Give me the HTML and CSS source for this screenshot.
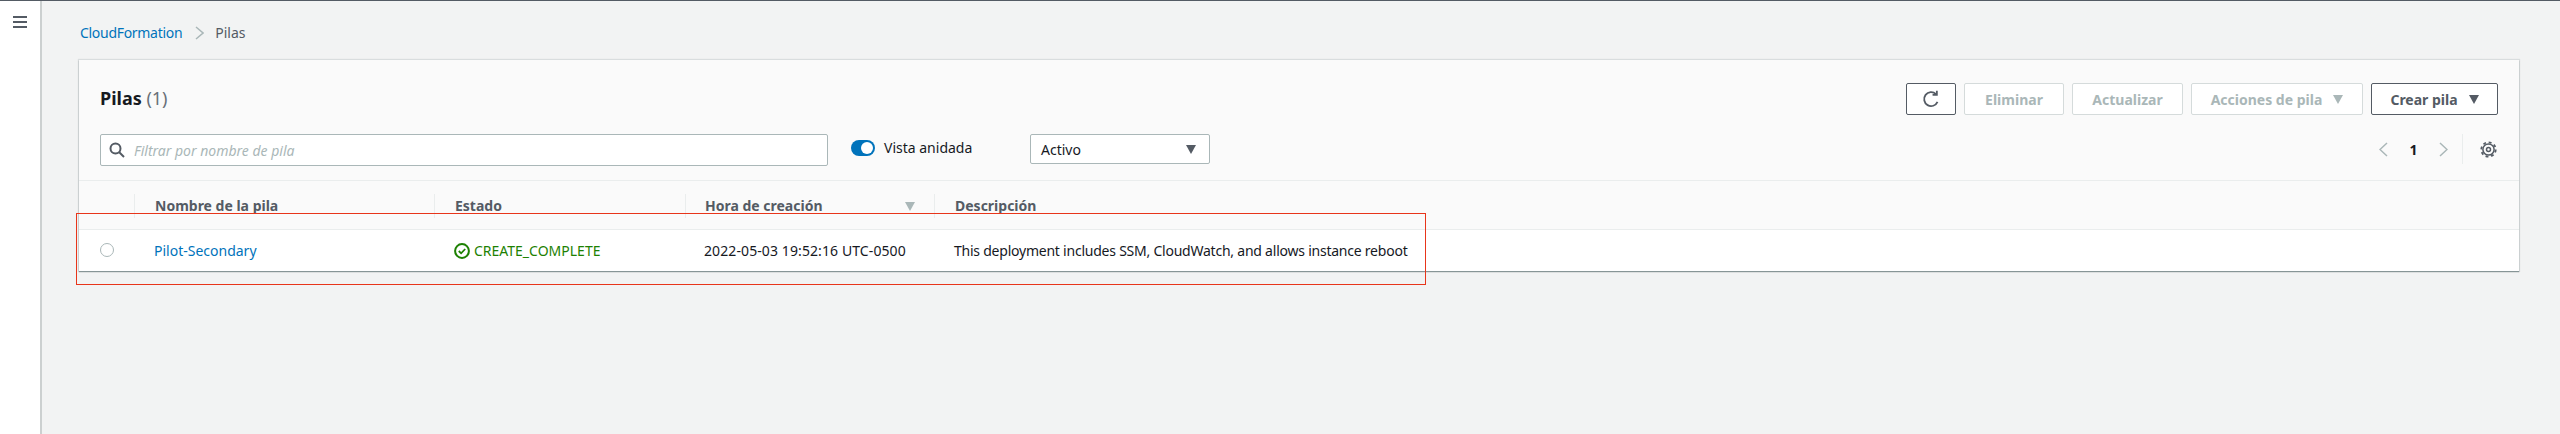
FILE: index.html
```html
<!DOCTYPE html>
<html lang="es">
<head>
    <meta charset="UTF-8">
    <meta name="viewport" content="width=device-width, initial-scale=1.0">
    <title>CloudFormation - Pilas</title>
    <link rel="stylesheet" href="styles.css">
</head>
<body>

    <!-- Barra lateral -->
    <aside class="side">
        <svg class="burger" width="14" height="12" viewBox="0 0 14 12"><path d="M0 1h14M0 6h14M0 11h14" stroke="#545b64" stroke-width="2"/></svg>
    </aside>

    <main class="content">
        <nav class="crumbs">
            <a class="link crumb-link" href="#">CloudFormation</a>
            <svg class="crumb-sep" width="9" height="14" viewBox="0 0 9 14"><path d="M1 1l7 6-7 6" fill="none" stroke="#aab7b8" stroke-width="1.5"/></svg>
            <span>Pilas</span>
        </nav>

        <section class="panel">
            <div class="panel-head">
                <div class="head-top">
                    <h1>Pilas <span class="count">(1)</span></h1>
                    <div class="actions">
                        <button class="btn btn-icon">
                            <svg width="18" height="18" viewBox="0 0 16 16"><path d="M13.8 10.6A6.2 6.2 0 1 1 12.4 3.6" fill="none" stroke="#545b64" stroke-width="1.6"/><path d="M13.2 .6v3.8H9.4" fill="none" stroke="#545b64" stroke-width="1.6"/></svg>
                        </button>
                        <button class="btn btn-off btn-eliminar">Eliminar</button>
                        <button class="btn btn-off btn-actualizar">Actualizar</button>
                        <button class="btn btn-off btn-acciones">Acciones de pila <i class="tri tri-off"></i></button>
                        <button class="btn btn-crear">Crear pila <i class="tri"></i></button>
                    </div>
                </div>
                <div class="head-bottom">
                    <label class="search">
                        <svg width="16" height="16" viewBox="0 0 16 16"><circle cx="6.5" cy="6.5" r="5" fill="none" stroke="#545b64" stroke-width="2"/><path d="M10 10l5 5" stroke="#545b64" stroke-width="2"/></svg>
                        <input type="text" placeholder="Filtrar por nombre de pila">
                    </label>
                    <span class="toggle"><i class="knob"></i></span>
                    <span class="toggle-label">Vista anidada</span>
                    <div class="select">Activo <i class="tri"></i></div>
                    <div class="pager">
                        <svg width="9" height="15" viewBox="0 0 9 15"><path d="M8 1L1 7.5 8 14" fill="none" stroke="#aab7b8" stroke-width="1.5"/></svg>
                        <span class="page-num">1</span>
                        <svg width="9" height="15" viewBox="0 0 9 15"><path d="M1 1l7 6.5L1 14" fill="none" stroke="#aab7b8" stroke-width="1.5"/></svg>
                        <span class="pager-sep"></span>
                        <svg class="gear" width="17" height="17" viewBox="0 0 17 17">
                            <circle cx="8.5" cy="8.5" r="5.6" fill="none" stroke="#545b64" stroke-width="1.5"/>
                            <circle cx="8.5" cy="8.5" r="7.2" fill="none" stroke="#545b64" stroke-width="1.8" stroke-dasharray="2.9 2.75"/>
                            <circle cx="8.5" cy="8.5" r="2" fill="none" stroke="#545b64" stroke-width="1.5"/>
                        </svg>
                    </div>
                </div>
            </div>

            <div class="cols cols-head">
                <div class="th"></div>
                <div class="th">Nombre de la pila</div>
                <div class="th">Estado</div>
                <div class="th th-sort">Hora de creación <i class="tri tri-off"></i></div>
                <div class="th">Descripción</div>
            </div>
            <div class="cols row">
                <div class="td td-radio"><span class="radio"></span></div>
                <div class="td"><a class="link" href="#">Pilot-Secondary</a></div>
                <div class="td status">
                    <svg width="16" height="16" viewBox="0 0 16 16"><circle cx="8" cy="8" r="6.9" fill="none" stroke="#1d8102" stroke-width="2"/><path d="M4.8 8l2.3 2.3 4.1-4.3" fill="none" stroke="#1d8102" stroke-width="1.8"/></svg>
                    CREATE_COMPLETE
                </div>
                <div class="td td-date">2022-05-03 19:52:16 UTC-0500</div>
                <div class="td td-desc">This deployment includes SSM, CloudWatch, and allows instance reboot</div>
            </div>
        </section>
    </main>

    <!-- Recuadro rojo de la captura -->
    <div class="mark"></div>

</body>
</html>
```

FILE: styles.css
```css
* {
    box-sizing: border-box;
}
body {
    margin: 0;
    height: 434px;
    display: flex;
    overflow: hidden;
    border-top: 1px solid #545b64;
    background: #f2f3f3;
    color: #16191f;
    font-family: "Noto Sans", sans-serif;
    font-size: 14px;
}
.side {
    width: 42px;
    flex: none;
    background: #fff;
    border-right: 2px solid #ccd0d0;
    padding: 15px 0 0 13px;
}
.burger {
    display: block;
}
.content {
    flex: 1;
    padding: 0 41px 0 37px;
}
.link {
    color: #0073bb;
    text-decoration: none;
}
.crumbs {
    height: 59px;
    padding: 22px 0 0 1px;
    display: flex;
    align-items: flex-start;
    color: #545b64;
    line-height: 19px;
}
.crumb-link {
    letter-spacing: -0.3px;
}
.crumb-sep {
    margin: 3px 11px 0 13px;
}
.panel {
    background: #fff;
    box-shadow: 0 1px 1px 0 #879596, 0 0 1px 1px rgba(0, 28, 36, 0.1);
}
.panel-head {
    background: #fafafa;
    height: 121px;
    padding: 23px 21px 0 21px;
    border-bottom: 1px solid #eaeded;
}
.head-top {
    display: flex;
    justify-content: space-between;
    height: 32px;
}
h1 {
    margin: 0;
    font-size: 18px;
    font-weight: 700;
    line-height: 30px;
}
.count {
    font-weight: 400;
    color: #687078;
}
.actions {
    display: flex;
    gap: 8px;
}
.btn {
    height: 32px;
    padding: 0;
    background: #fff;
    border: 1px solid #545b64;
    border-radius: 2px;
    color: #545b64;
    font-family: inherit;
    font-size: 14px;
    font-weight: 700;
    display: flex;
    align-items: center;
    justify-content: center;
}
.btn-icon {
    width: 50px;
}
.btn-off {
    border-color: #d5dbdb;
    color: #aab7b8;
}
.btn-eliminar {
    width: 100px;
}
.btn-actualizar {
    width: 111px;
}
.btn-acciones {
    width: 172px;
}
.btn-crear {
    width: 127px;
}
.tri {
    display: inline-block;
    width: 0;
    height: 0;
    margin-left: 11px;
    border-style: solid;
    border-width: 9px 5.5px 0;
    border-color: #545b64 transparent transparent;
}
.tri-off {
    border-top-color: #aab7b8;
}
.head-bottom {
    margin-top: 19px;
    display: flex;
    align-items: flex-start;
}
.search {
    width: 728px;
    height: 32px;
    background: #fff;
    border: 1px solid #aab7b8;
    border-radius: 2px;
    padding-left: 8px;
    display: flex;
    align-items: center;
    gap: 9px;
}
.search input {
    flex: 1;
    border: none;
    outline: none;
    padding: 0;
    background: none;
    font-family: inherit;
    font-size: 14px;
    font-style: italic;
}
.search input::placeholder {
    color: #aab7b8;
    opacity: 1;
}
.toggle {
    width: 24px;
    height: 16px;
    margin: 6px 0 0 23px;
    border-radius: 8px;
    background: #0073bb;
    display: flex;
    align-items: center;
    justify-content: flex-end;
    padding-right: 2px;
}
.knob {
    width: 12px;
    height: 12px;
    border-radius: 50%;
    background: #fff;
}
.toggle-label {
    margin: 4px 0 0 9px;
    line-height: 19px;
    width: 146px;
}
.select {
    width: 180px;
    height: 30px;
    background: #fff;
    border: 1px solid #aab7b8;
    border-radius: 2px;
    padding: 0 13px 0 10px;
    display: flex;
    align-items: center;
    justify-content: space-between;
}
.pager {
    margin-left: auto;
    height: 30px;
    display: flex;
    align-items: center;
}
.page-num {
    width: 51px;
    text-align: center;
    font-weight: 700;
}
.pager-sep {
    width: 1px;
    height: 30px;
    margin: 0 17px 0 14px;
    background: #eaeded;
}
.gear {
    margin-right: 1px;
}
.cols {
    display: grid;
    grid-template-columns: 55px 300px 251px 249px 1fr;
}
.cols-head {
    height: 49px;
    background: #fafafa;
    border-bottom: 1px solid #eaeded;
    padding-top: 13px;
}
.th {
    height: 24px;
    padding-left: 20px;
    border-left: 1px solid #eaeded;
    color: #545b64;
    font-weight: 700;
    line-height: 24px;
}
.th:first-child {
    border-left: none;
}
.th-sort {
    display: flex;
    align-items: center;
    justify-content: space-between;
    padding-left: 19px;
    padding-right: 19px;
}
.row {
    height: 41px;
}
.td {
    padding: 10px 0 0 20px;
    line-height: 21px;
    white-space: nowrap;
}
.td-radio {
    padding: 13px 0 0 21px;
}
.radio {
    display: block;
    width: 14px;
    height: 14px;
    border: 1px solid #aab7b8;
    border-radius: 50%;
}
.status {
    display: flex;
    align-items: flex-start;
    gap: 4px;
    color: #1d8102;
}
.status svg {
    margin-top: 3px;
}
.td-date {
    padding-left: 19px;
    letter-spacing: 0.1px;
}
.td-desc {
    letter-spacing: -0.23px;
}
.mark {
    position: absolute;
    left: 76px;
    top: 213px;
    width: 1350px;
    height: 72px;
    border: 1px solid #e8351a;
}
```
